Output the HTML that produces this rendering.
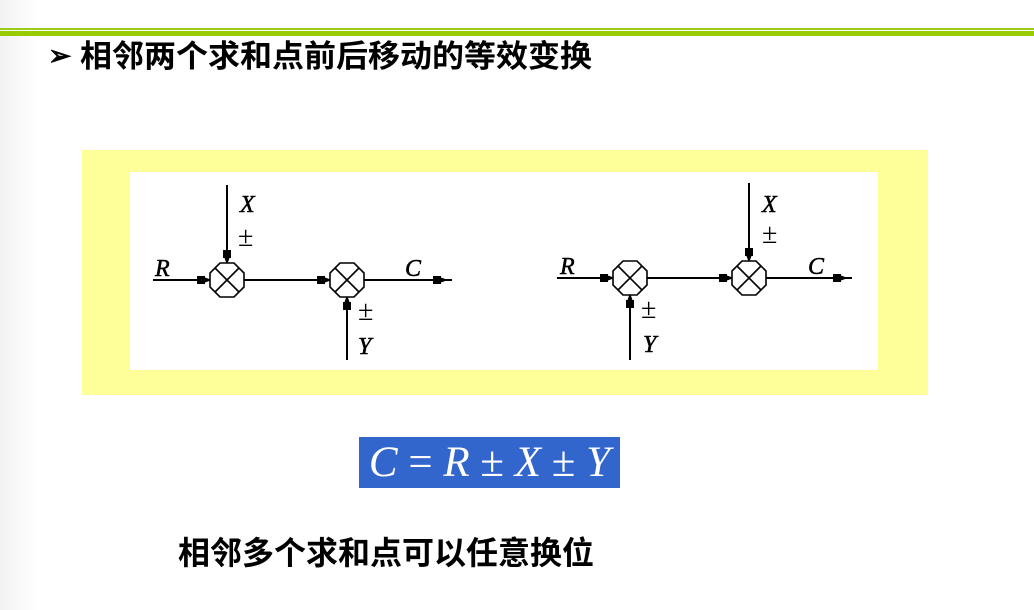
<!DOCTYPE html>
<html><head><meta charset="utf-8"><style>
body{margin:0;width:1034px;height:610px;overflow:hidden;background:#fff;position:relative;font-family:"Liberation Sans","Noto Sans CJK SC",sans-serif}
.lg{position:absolute;left:0;top:0;width:40px;height:610px;background:linear-gradient(90deg,#f2f2f2,#fff)}
.g1{position:absolute;left:0;top:28px;width:1034px;height:2px;background:#9ccc1a}
.g2{position:absolute;left:0;top:31px;width:1034px;height:5px;background:#99cc00}
.t{position:absolute;font-weight:bold;color:#000;white-space:nowrap;line-height:1}
.y{position:absolute;left:82px;top:150px;width:846px;height:245px;background:#ffff99}
.w{position:absolute;left:130px;top:172px;width:748px;height:198px;background:#fff}
.b{position:absolute;left:359px;top:437px;width:261px;height:51px;background:#3366cc;color:#fff;font-family:"Liberation Serif",serif;font-size:43px;line-height:51px;text-align:center;white-space:nowrap}
</style></head><body>
<div class="lg"></div>
<div class="g1"></div><div class="g2"></div>
<div class="t" style="left:48px;top:40px;font-size:28px;line-height:32px">&#x27A2;</div>
<div class="t" style="left:80px;top:41px;font-size:32px;transform:scaleY(0.97);transform-origin:top left">相邻两个求和点前后移动的等效变换</div>
<div class="y"></div><div class="w"></div>
<svg style="position:absolute;left:0;top:0" width="1034" height="610">
<defs>
<g id="c"><polygon points="-7,-17 7,-17 17,-7 17,7 7,17 -7,17 -17,7 -17,-7" fill="#fff" stroke="#000" stroke-width="1.6"/><path d="M-12,-12L12,12M12,-12L-12,12" stroke="#000" stroke-width="1.6"/></g>
<g id="ah"><rect x="-11" y="-4" width="8" height="8"/><path d="M-3,-2.5L4,0L-3,2.5Z"/></g>
</defs>
<g stroke="#000" stroke-width="2" fill="none">
<path d="M153,280H210M244,280H330M364,280H452M227,185V263M347,297V360"/>
<path d="M557,278H613M647,278H732M766,278H852M749,183V261M630,295V360"/>
</g>
<g fill="#000">
<use href="#ah" transform="translate(208,280)"/><use href="#ah" transform="translate(328,280)"/><use href="#ah" transform="translate(444,280)"/>
<use href="#ah" transform="translate(227,261) rotate(90)"/><use href="#ah" transform="translate(347,299) rotate(-90)"/>
<use href="#ah" transform="translate(611,278)"/><use href="#ah" transform="translate(730,278)"/><use href="#ah" transform="translate(844,278)"/>
<use href="#ah" transform="translate(749,259) rotate(90)"/><use href="#ah" transform="translate(630,297) rotate(-90)"/>
</g>
<use href="#c" x="227" y="280"/><use href="#c" x="347" y="280"/>
<use href="#c" x="630" y="278"/><use href="#c" x="749" y="278"/>
<g font-family="Liberation Serif,serif" font-style="italic" font-size="24" fill="#000" stroke="#000" stroke-width="0.5">
<text x="240" y="212">X</text><text x="155" y="276">R</text><text x="405" y="276">C</text><text x="358" y="354">Y</text>
<text x="762" y="212">X</text><text x="560" y="274">R</text><text x="808" y="274">C</text><text x="643" y="352">Y</text>
</g>
<g font-family="Liberation Serif,serif" font-size="28" fill="#000">
<text x="238" y="246">±</text><text x="358" y="320">±</text><text x="762" y="243">±</text><text x="641" y="318">±</text>
</g>
</svg>
<div class="b"><i>C</i> = <i>R</i> ± <i>X</i> ± <i>Y</i></div>
<div class="t" style="left:178px;top:537px;font-size:32px">相邻多个求和点可以任意换位</div>
</body></html>
